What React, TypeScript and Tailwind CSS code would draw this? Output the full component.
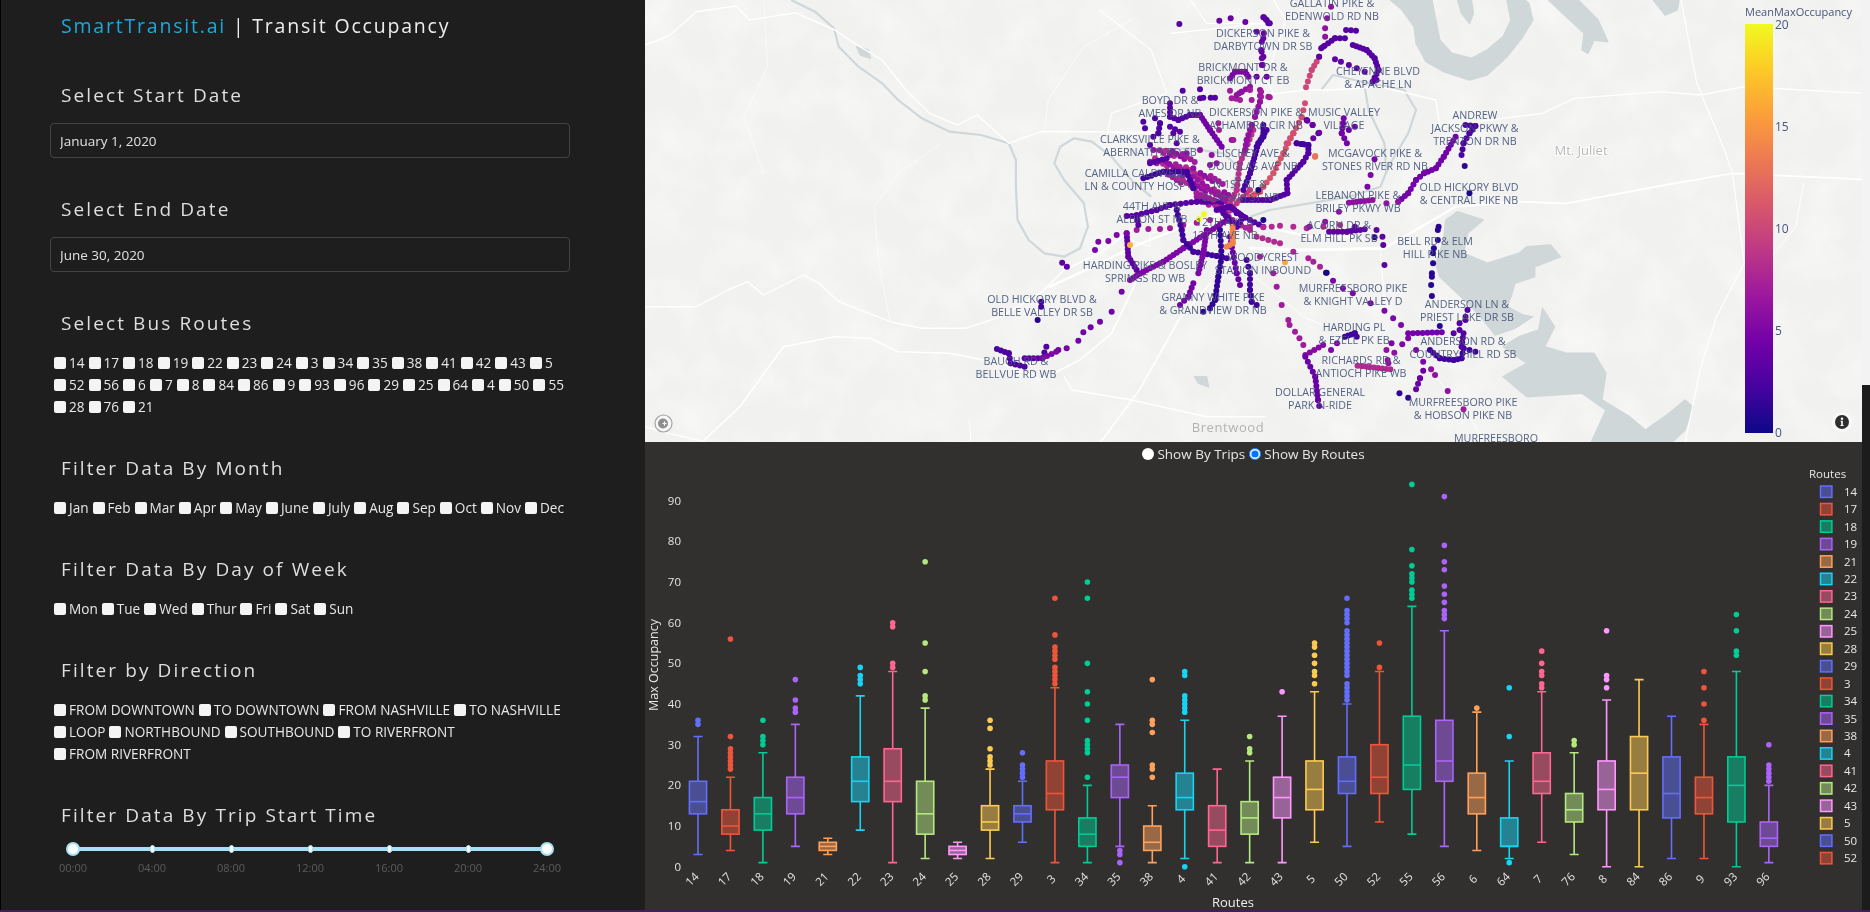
import React from "react";

type Frame = (x: number, y: number) => [number, number];

// the map data was read off crops of the map, so each trace says which crop it came from
const west: Frame = (x, y) => [645 + x / 2.529, y / 3];
const east: Frame = (x, y) => [1250 + x / 2.529, y / 3];
const center: Frame = (x, y) => [1050 + x / 3, 130 + y / 3];
const north: Frame = (x, y) => [1120 + x / 3, y / 3];

const parse = (frame: Frame, pts: string) =>
  pts.split(" ").map((p) => {
    const [x, y] = p.split(",").map(Number);
    return frame(x, y);
  });

const toLine = (frame: Frame, pts: string) =>
  parse(frame, pts)
    .map(([x, y]) => `${x.toFixed(1)},${y.toFixed(1)}`)
    .join(" ");

const PLASMA = [
  [13, 8, 135],
  [70, 3, 159],
  [114, 1, 168],
  [156, 23, 158],
  [189, 55, 134],
  [216, 87, 107],
  [237, 121, 83],
  [251, 159, 58],
  [253, 202, 38],
  [240, 249, 33],
];

function plasma(v: number) {
  const t = (Math.min(v, 20) / 20) * (PLASMA.length - 1);
  const i = Math.min(Math.floor(t), PLASMA.length - 2);
  const c = PLASMA[i].map((a, k) => Math.round(a + (PLASMA[i + 1][k] - a) * (t - i)));
  return `rgb(${c[0]},${c[1]},${c[2]})`;
}

const TRACES: [Frame, number, number, string][] = [
  // center
  [center, 5, 4, "240,450 280,425 340,395 400,355 470,310 530,270"],
  [center, 3.5, 4, "230,310 235,380 260,420"],
  [center, 5, 0, "135,360 145,335 175,333 200,315 230,310"],
  [center, 7, 0, "260,300 295,297 330,297 360,295 400,285 440,278 480,270"],
  [center, 4.5, 0, "215,485 185,545 150,575 122,592 100,607 85,632 50,655 25,660"],
  [center, 3, 5, "230,258 260,258 265,285"],
  [center, 3, 5, "260,255 320,240 360,225 440,215 530,215"],
  [center, 2, 5, "380,240 395,300 400,330 430,365 500,378 530,385"],
  [center, 1.5, 5, "510,300 515,380 505,440 495,510 480,535 460,545"],
  [center, 5, 4, "470,300 460,370 445,430"],
  [center, 4.5, 5, "430,460 415,500 390,525"],
  [center, 2, 6, "590,390 600,430 600,480 605,515 620,525"],
  [center, 4, 5, "540,320 560,430 570,465"],
  [center, 3, 5, "560,250 640,290"],
  [center, 8, 0, "600,290 640,292 665,290 690,287 730,290 770,295 820,290 870,285"],
  [center, 8, 6, "620,320 690,340"],
  [center, 7.5, 0, "730,365 775,385 790,395 810,410"],
  [center, 0.5, 0, "828,428"],
  [center, 7, 0, "630,380 670,430 680,470 695,525 715,570 735,605 760,645"],
  [center, 6, 0, "300,95 360,75 410,70 450,60 485,75 500,100 480,105 430,115 400,135 545,30"],
  [center, 6.5, 5, "430,140 470,170 500,190 530,215"],
  [center, 7, 5, "420,160 440,190 490,210"],
  [center, 7.5, 5, "500,230 560,280 600,300"],
  [center, 9, 5, "540,240 570,210 600,180"],
  [center, 2, 4, "280,145 340,125 410,125 430,175"],
  [center, 3, 4, "300,100 350,85"],
  [center, 8.5, 5, "610,0 570,100 560,180 540,220"],
  [center, 2.5, 4, "650,0 625,40 600,130 580,180"],
  [center, 11, 6, "730,10 700,70 670,130 630,185 600,200"],
  [center, 3, 4, "740,40 775,45 775,70 760,95 710,150 712,190 660,210 580,210"],
  [center, 3, 3, "500,240 540,230 580,260 560,290 520,250"],
  [center, 14, 3, "548,290 548,340 530,350"],
  [center, 20, 0, "447,268 462,253"],
  [center, 16.5, 0, "240,345"],
  [center, 16, 0, "705,397"],
  [center, 0.5, 0, "625,180 640,270 830,428"],
  [center, 12, 0, "795,80"],
  // north
  [north, 3, 0, "178,72 188,272 240,268"],
  [north, 4, 0, "298,62 332,55 376,66 430,52 437,58 445,70"],
  [north, 4, 0, "410,95 430,115 425,155 430,170 428,195 440,230 410,230"],
  [north, 5, 4, "330,235 345,215 375,215 385,230"],
  [north, 7, 0, "335,295 348,296 360,300 395,300 330,272"],
  [north, 6, 4, "390,260 365,275 350,285"],
  [north, 3, 0, "240,295 250,293 272,293 285,293"],
  [north, 6, 6, "420,270 420,305 405,350 395,375 380,420 375,450"],
  [north, 7, 0, "445,290 295,370 297,390 340,420"],
  [north, 3, 4, "150,310 150,350 175,360 210,345 240,345"],
  [north, 4.5, 4, "240,345 270,390 305,440"],
  [north, 2.5, 5, "105,355 120,370 115,400 100,410"],
  [north, 2.5, 5, "70,365 75,385"],
  [north, 3, 5, "150,380 180,395"],
  [north, 3, 0, "160,400 170,430 90,435"],
  [north, 2, 4, "430,375 430,410 410,440"],
  [north, 5, 0, "597,170"],
  [north, 10, 6, "590,185 575,210 558,262"],
  [north, 10.5, 6, "555,310 545,352 520,400 500,430"],
  [north, 2, 0, "560,360 578,375 530,430 548,432 565,438 595,400"],
  // east
  [east, 6, 0, "205,20 195,55 190,85 190,110 185,140"],
  [east, 3, 4, "180,145 215,115 240,115"],
  [east, 3, 4, "243,90 268,92"],
  [east, 3, 4, "260,135 295,150 315,175 325,210 310,245"],
  [east, 3.5, 0, "175,170 215,178 230,185 250,195 270,205 290,215 320,240"],
  [east, 3, 4, "35,52 50,70"],
  [east, 4, 0, "35,100 30,125 28,150 30,175 30,195"],
  [east, 7, 0, "28,275 28,290 50,292 0,270"],
  [east, 4.5, 5, "237,355 232,400 245,430"],
  [east, 4, 0, "250,390 265,380 160,415 175,398 145,362 158,375"],
  [east, 5, 0, "315,478 305,525 297,560"],
  [east, 4.5, 5, "375,605 400,580 420,540 440,520 470,505 490,470 520,410"],
  [east, 2.5, 5, "545,375 570,378 555,400 540,430 535,465"],
  [east, 1.5, 0, "543,498"],
  [east, 0.5, 0, "555,580"],
  [east, 6, 4, "250,608 310,600"],
  [east, 6, 0, "345,610 375,605 225,635 190,665 150,680"],
  [east, 13, 0, "165,468"],
  [east, 3.5, 5, "200,695 245,695 290,688"],
  [east, 3.5, 0, "320,690 335,710 337,735 340,795 265,680"],
  [east, 1, 0, "315,712 477,680 475,690 475,720 465,745 463,760 463,790 460,820 460,830 458,855 460,888"],
  [east, 5, 0, "210,842 235,865 260,880 305,910 340,932 362,955 382,975 400,1015 420,1050 438,1085"],
  [east, 4.5, 5, "400,1000 485,997"],
  [east, 3, 0, "515,1000 545,960 530,990 550,930 545,950 530,970"],
  [east, 1, 0, "480,978"],
  [east, 2, 5, "455,1050 480,1075 515,1080 535,1075 540,1045 570,1055"],
  [east, 3, 5, "540,1000 535,1040"],
  [east, 4, 6, "438,1112 430,1135 420,1168"],
  [east, 6, 0, "458,1108 468,1125 500,1173 345,1050 365,1058 348,1080 350,1090"],
  [east, 1.5, 0, "378,1180 400,1193"],
  [east, 7, 0, "540,1228"],
  [east, 8, 4, "272,1097 355,1108"],
  [east, 5, 0, "358,1030 385,1033 205,1050 220,1030"],
  [east, 2, 4, "240,1010 265,1000 270,1010"],
  [east, 7, 0, "100,975 125,1015"],
  [east, 5.5, 5, "140,1065 185,1035"],
  [east, 4, 5, "140,1070 165,1130 172,1200 175,1218"],
  // west
  [west, 3.5, 0, "1055,788 1067,800"],
  [west, 2, 4, "1002,905 1002,920"],
  [west, 1, 0, "993,960"],
  [west, 2.5, 5, "890,1047 920,1060 925,1090 960,1100"],
  [west, 2.5, 5, "1015,1040 1005,1075"],
  [west, 3.5, 5, "960,1075 1005,1075"],
  [west, 5, 6, "1005,1075 1040,1055"],
];

// the stops northwest of downtown are too many to trace, so they get a fixed scatter along the band
const SCATTER = Array.from({ length: 150 }, (_, i) => {
  const x = 310 + ((i * 73) % 240);
  const y = 60 + ((i * 137) % 190);
  return { x, y, v: 6 + (i % 3) };
}).filter((p) => Math.abs(p.y - 60 - (p.x - 320) * 0.75) < 55);

function sampleTrace(frame: Frame, step: number, pts: string) {
  const line = parse(frame, pts);
  if (step === 0) return line;
  const out: [number, number][] = [];
  for (let i = 0; i < line.length - 1; i++) {
    const [x1, y1] = line[i];
    const [x2, y2] = line[i + 1];
    const n = Math.max(1, Math.round(Math.hypot(x2 - x1, y2 - y1) / step));
    for (let k = 0; k <= n; k++) out.push([x1 + ((x2 - x1) * k) / n, y1 + ((y2 - y1) * k) / n]);
  }
  return out;
}

const LABELS: [number, number, string[]][] = [
  [1332, 3, ["GALLATIN PIKE &", "EDENWOLD RD NB"]],
  [1263, 33, ["DICKERSON PIKE &", "DARBYTOWN DR SB"]],
  [1243, 67, ["BRICKMONT DR &", "BRICKMONT CT EB"]],
  [1378, 71, ["CHEYENNE BLVD", "& APACHE LN"]],
  [1170, 100, ["BOYD DR &", "AMES DR NB"]],
  [1256, 112, ["DICKERSON PIKE &", "ALHAMBRA CIR NB"]],
  [1344, 112, ["MUSIC VALLEY", "VILLAGE"]],
  [1475, 115, ["ANDREW", "JACKSON PKWY &", "TRENTON DR NB"]],
  [1150, 139, ["CLARKSVILLE PIKE &", "ABERNATHY RD SB"]],
  [1253, 153, ["LISCHEY AVE &", "DOUGLAS AVE NB"]],
  [1375, 153, ["MCGAVOCK PIKE &", "STONES RIVER RD NB"]],
  [1135, 173, ["CAMILLA CALDWELL", "LN & COUNTY HOSP"]],
  [1240, 184, ["N 1ST ST &", "OLDHAM ST NB"]],
  [1469, 187, ["OLD HICKORY BLVD", "& CENTRAL PIKE NB"]],
  [1358, 195, ["LEBANON PIKE &", "BRILEY PKWY WB"]],
  [1152, 206, ["44TH AVE &", "ALBION ST NB"]],
  [1225, 222, ["12TH AVE &", "12TH AVE NB"]],
  [1339, 225, ["ACORN DR &", "ELM HILL PK SB"]],
  [1435, 241, ["BELL RD & ELM", "HILL PIKE NB"]],
  [1263, 257, ["WOODYCREST", "STATION INBOUND"]],
  [1145, 265, ["HARDING PIKE & BOSLEY", "SPRINGS RD WB"]],
  [1353, 288, ["MURFREESBORO PIKE", "& KNIGHT VALLEY D"]],
  [1213, 297, ["GRANNY WHITE PIKE", "& GRANDVIEW DR NB"]],
  [1042, 299, ["OLD HICKORY BLVD &", "BELLE VALLEY DR SB"]],
  [1467, 304, ["ANDERSON LN &", "PRIEST LAKE DR SB"]],
  [1354, 327, ["HARDING PL", "& EZELL PK EB"]],
  [1463, 341, ["ANDERSON RD &", "COUNTRY HILL RD SB"]],
  [1361, 360, ["RICHARDS RD &", "ANTIOCH PIKE WB"]],
  [1016, 361, ["BAUGH RD &", "BELLVUE RD WB"]],
  [1320, 392, ["DOLLAR GENERAL", "PARK N-RIDE"]],
  [1463, 402, ["MURFREESBORO PIKE", "& HOBSON PIKE NB"]],
  [1496, 438, ["MURFREESBORO"]],
];

const LAKES: [Frame, string][] = [
  [east, "355,0 385,30 415,80 420,130 445,185 490,215 555,240 600,225 650,170 690,110 715,60 705,10 695,0 650,0 660,60 640,110 600,150 560,175 510,160 480,120 470,60 460,0"],
  [east, "525,0 560,0 565,40 555,70 535,40"],
  [east, "755,0 830,0 880,60 905,125 870,120 855,160 840,150 845,100 800,50"],
  [east, "1020,0 1085,0 1080,30 1050,45"],
  [east, "495,660 525,635 590,660 550,700 540,760 600,790 680,760 700,740 760,735 785,770 720,800 720,830 670,850 660,890 650,920 690,945 715,950 670,985 620,1005 590,960 560,920 480,830 470,790 490,720"],
  [east, "740,925 770,980 745,1040 800,1060 870,1060 900,1120 890,1200 960,1250 1000,1290 1060,1240 1100,1200 1120,1220 1100,1290 1060,1335 860,1335 900,1230 840,1180 700,1190 640,1130 700,1090 640,1040 680,1010 730,990"],
  [west, "1390,1130 1420,1130 1425,1160 1400,1150"],
  [west, "535,140 565,150 570,175 545,165"],
];

const RIVERS: [Frame, string][] = [
  [west, "370,0 430,35 478,85 490,140 540,200 600,250 640,300 700,355 770,395 850,405 920,430 938,480 938,560 942,660 970,720 1010,760 1060,770 1100,745 1120,680 1110,610 1060,540 1035,490 1050,440 1085,415 1130,425 1180,470 1230,540 1280,590"],
  [center, "300,60 420,55 520,70 565,110 545,180"],
  [east, "0,650 50,630 150,610 250,590 330,560 350,500 400,400 420,330 390,270 300,250 210,225 180,270"],
  [east, "290,260 300,330 340,430 345,520"],
];

const ROADS: [Frame, string, number][] = [
  [west, "0,135 60,108 130,35 230,18 265,60 380,38 480,90 530,130 600,180 660,270 720,340 790,375 840,345 920,430 1000,395 1150,395 1300,400", 1.4],
  [west, "0,920 130,920 210,870 260,845 300,885 400,825 440,850 490,905 620,965 700,985 810,985 900,950 1000,880 1060,810 1150,760 1230,690", 1.4],
  [west, "150,1320 240,1220 350,1040 480,1010 570,1015 640,1055 770,1060 900,1090 1000,1140 1100,1080 1180,1000 1240,850", 1.6],
  [west, "1060,1130 1080,1170 1230,1200 1420,1250 1568,1250", 1.4],
  [west, "1150,1330 1250,1170 1350,960 1430,850", 1.6],
  [west, "1150,30 1280,150 1320,280 1180,340 1170,400", 1.2],
  [west, "1380,0 1420,70 1568,70 1330,100", 1.2],
  [west, "0,1280 60,1300 150,1325", 1.2],
  [west, "820,1260 825,1325 650,1330", 1],
  [west, "1010,395 1020,300 1110,140 1230,60", 0.7],
  [west, "300,0 310,200 250,350 300,520", 0.6],
  [west, "750,430 640,520 580,620 590,780 620,965", 0.6],
  [east, "1090,0 1130,250 1200,450 1220,520 1250,790 1180,950 1140,1100 1100,1330", 1.2],
  [east, "680,605 800,610 1050,555 1220,520 1548,538", 1.8],
  [east, "480,380 740,340 820,295 1040,275 1140,285 1250,260 1548,280", 1.3],
  [east, "340,745 130,750 0,745", 3],
  [east, "340,745 520,620 680,605", 2.2],
  [east, "0,290 140,270 200,270 330,260 470,300 480,380", 1.4],
  [east, "1400,550 1380,680 1300,800 1250,790", 0.9],
  [east, "330,760 340,900 470,1130 560,1260 600,1335", 1],
  [east, "60,0 90,60 40,240 60,280 0,420", 1.2],
  [center, "0,470 150,400 250,350 400,290 520,250", 2.4],
  [center, "520,250 640,290 780,320 900,320", 2.4],
  [center, "240,330 300,350 300,310 390,290", 1],
  [center, "540,380 640,460 760,560 900,620", 1],
];

// name, low, q1, median, q3, high, outliers
const BOXES: [string, number, number, number, number, number, number[]][] = [
  ["14", 3, 13, 16, 21, 32, [35, 36]],
  ["17", 4, 8, 10, 14, 22, [24, 25, 26, 27, 28, 29, 32, 56]],
  ["18", 1, 9, 13, 17, 28, [30, 31, 32, 36]],
  ["19", 5, 13, 17, 22, 35, [38, 39, 41, 46]],
  ["21", 3, 4, 5, 6, 7, []],
  ["22", 9, 16, 21, 27, 42, [45, 46, 47, 49]],
  ["23", 1, 16, 21, 29, 48, [49, 50, 59, 60]],
  ["24", 2, 8, 13, 21, 39, [41, 42, 48, 55, 75]],
  ["25", 2, 3, 4, 5, 6, []],
  ["28", 2, 9, 11, 15, 24, [25, 26, 27, 29, 34, 36]],
  ["29", 6, 11, 13, 15, 21, [22, 23, 24, 25, 28]],
  ["3", 1, 14, 18, 26, 44, [45, 46, 47, 48, 49, 51, 52, 53, 54, 57, 66]],
  ["34", 1, 5, 8, 12, 20, [22, 28, 29, 30, 31, 36, 40, 43, 50, 66, 70]],
  ["35", 5, 17, 22, 25, 35, [1, 3, 4]],
  ["38", 1, 4, 6, 10, 15, [22, 24, 25, 33, 35, 36, 46]],
  ["4", 2, 14, 17, 23, 36, [0, 38, 39, 40, 41, 42, 47, 48]],
  ["41", 1, 5, 9, 15, 24, []],
  ["42", 1, 8, 12, 16, 26, [28, 29, 32]],
  ["43", 1, 12, 17, 22, 37, [43]],
  ["5", 6, 14, 19, 26, 43, [45, 47, 48, 50, 52, 54, 55]],
  ["50", 5, 18, 21, 27, 40, [41, 42, 43, 44, 45, 47, 48, 49, 50, 51, 52, 53, 54, 55, 56, 57, 58, 60, 61, 62, 63, 66]],
  ["52", 11, 18, 22, 30, 48, [49, 55]],
  ["55", 8, 19, 25, 37, 64, [66, 67, 68, 70, 71, 72, 74, 78, 94]],
  ["56", 5, 21, 26, 36, 58, [61, 62, 63, 65, 67, 69, 73, 75, 79, 91]],
  ["6", 4, 13, 17, 23, 38, [39]],
  ["64", 2, 5, 5, 12, 26, [1, 32, 44]],
  ["7", 6, 18, 21, 28, 43, [44, 45, 47, 48, 50, 53]],
  ["76", 3, 11, 14, 18, 28, [30, 31]],
  ["8", 0, 14, 19, 26, 41, [44, 46, 47, 58]],
  ["84", 0, 14, 23, 32, 46, []],
  ["86", 2, 12, 18, 27, 37, []],
  ["9", 2, 13, 17, 22, 35, [36, 40, 44, 48]],
  ["93", 0, 11, 20, 27, 48, [52, 53, 58, 62]],
  ["96", 1, 5, 7, 11, 20, [21, 22, 23, 24, 25, 30]],
];

const COLORS = ["#636efa", "#ef553b", "#00cc96", "#ab63fa", "#ffa15a", "#19d3f3", "#ff6692", "#b6e880", "#ff97ff", "#fecb52"];

const boxX = (i: number) => 698 + i * 32.45;
const valueY = (v: number) => 866.7 - v * 4.067;

const ROUTES = ["14", "17", "18", "19", "22", "23", "24", "3", "34", "35", "38", "41", "42", "43", "5", "52", "56", "6", "7", "8", "84", "86", "9", "93", "96", "29", "25", "64", "4", "50", "55", "28", "76", "21"];
const MONTHS = ["Jan", "Feb", "Mar", "Apr", "May", "June", "July", "Aug", "Sep", "Oct", "Nov", "Dec"];
const DAYS = ["Mon", "Tue", "Wed", "Thur", "Fri", "Sat", "Sun"];
const DIRECTIONS = ["FROM DOWNTOWN", "TO DOWNTOWN", "FROM NASHVILLE", "TO NASHVILLE", "LOOP", "NORTHBOUND", "SOUTHBOUND", "TO RIVERFRONT", "FROM RIVERFRONT"];
const TIMES = ["00:00", "04:00", "08:00", "12:00", "16:00", "20:00", "24:00"];

function Heading({ children }: { children: React.ReactNode }) {
  return <h2 className="ml-[11px] text-[19px] leading-[28px] font-normal tracking-[2.1px] text-[#dedede]">{children}</h2>;
}

function CheckList({ items }: { items: string[] }) {
  return (
    <div className="mt-[15px] ml-[4px] flex w-[516px] flex-wrap gap-x-[4px] text-[13.6px] leading-[22px] text-[#e8e8e8]">
      {items.map((item) => (
        <label key={item} className="flex items-center gap-[3px]">
          <input type="checkbox" className="h-[12px] w-[12px] appearance-none rounded-[2px] bg-[#f4f4f4]" />
          {item}
        </label>
      ))}
    </div>
  );
}

function DateField({ value }: { value: string }) {
  return (
    <input
      readOnly
      value={value}
      className="mt-[14px] block h-[35px] w-[520px] rounded-[4px] border border-[#444444] bg-transparent pl-[9px] text-[13.5px] text-[#e0e0e0]"
    />
  );
}

function TimeSlider() {
  return (
    <div className="mt-[12px] ml-[9px] w-[502px]">
      <div className="relative flex h-[16px] items-center justify-between">
        <div className="absolute right-[14px] left-[14px] h-[4px] rounded-full bg-[#a5e0f7]" />
        {TIMES.map((t, i) => (
          <div key={t} className="relative flex w-[28px] justify-center">
            {i === 0 || i === TIMES.length - 1 ? (
              <span className="h-[14px] w-[14px] rounded-full border-[2px] border-[#a5e0f7] bg-white" />
            ) : (
              <span className="h-[8px] w-[5px] rounded-full border border-[#a5e0f7] bg-white" />
            )}
          </div>
        ))}
      </div>
      <div className="mt-[3px] flex justify-between text-[11px] leading-[16px] text-[#5c5c5c]">
        {TIMES.map((t) => (
          <span key={t} className="w-[28px] text-center">
            {t}
          </span>
        ))}
      </div>
    </div>
  );
}

function Sidebar() {
  return (
    <aside className="h-full w-[645px] shrink-0 border-l border-black bg-[#1e1e1e] pt-[12px] pl-[49px]">
      <h1 className="ml-[11px] text-[19.5px] leading-[28px] font-normal tracking-[1.8px] text-[#ededed]">
        <span className="text-[#1ea7dc]">SmartTransit.ai</span> | Transit Occupancy
      </h1>
      <div className="mt-[41px]">
        <Heading>Select Start Date</Heading>
        <DateField value="January 1, 2020" />
      </div>
      <div className="mt-[37px]">
        <Heading>Select End Date</Heading>
        <DateField value="June 30, 2020" />
      </div>
      <div className="mt-[37px]">
        <Heading>Select Bus Routes</Heading>
        <CheckList items={ROUTES} />
      </div>
      <div className="mt-[36px]">
        <Heading>Filter Data By Month</Heading>
        <CheckList items={MONTHS} />
      </div>
      <div className="mt-[36px]">
        <Heading>Filter Data By Day of Week</Heading>
        <CheckList items={DAYS} />
      </div>
      <div className="mt-[36px]">
        <Heading>Filter by Direction</Heading>
        <CheckList items={DIRECTIONS} />
      </div>
      <div className="mt-[36px]">
        <Heading>Filter Data By Trip Start Time</Heading>
        <TimeSlider />
      </div>
    </aside>
  );
}

function TransitMap() {
  return (
    <svg viewBox="645 0 1217 442" className="block h-[442px] w-[1217px] bg-[#f1f1f0]">
      <defs>
        <linearGradient id="plasma" x1="0" y1="1" x2="0" y2="0">
          {PLASMA.map((c, i) => (
            <stop key={i} offset={i / (PLASMA.length - 1)} stopColor={`rgb(${c[0]},${c[1]},${c[2]})`} />
          ))}
        </linearGradient>
        <filter id="terrain" x="0" y="0" width="100%" height="100%">
          <feTurbulence type="fractalNoise" baseFrequency="0.025" numOctaves="4" seed="7" />
          <feColorMatrix values="0 0 0 0 1  0 0 0 0 1  0 0 0 0 1  1.6 0 0 0 -0.62" />
        </filter>
      </defs>
      <rect x="645" y="0" width="1217" height="442" filter="url(#terrain)" opacity="0.55" />
      {LAKES.map(([f, pts], i) => (
        <polygon key={i} points={toLine(f, pts)} fill="#d0d7d9" stroke="#d0d7d9" strokeWidth="1.5" strokeLinejoin="round" />
      ))}
      {RIVERS.map(([f, pts], i) => (
        <polyline key={i} points={toLine(f, pts)} fill="none" stroke="#cfd7da" strokeWidth="2.2" strokeLinejoin="round" />
      ))}
      {ROADS.map(([f, pts, w], i) => (
        <polyline key={i} points={toLine(f, pts)} fill="none" stroke="#ffffff" strokeWidth={w} strokeLinejoin="round" strokeLinecap="round" />
      ))}

      {SCATTER.map((p, i) => {
        const [x, y] = center(p.x, p.y);
        return <circle key={i} cx={x} cy={y} r="3" fill={plasma(p.v)} />;
      })}
      {TRACES.map(([f, v, step, pts], i) => (
        <g key={i} fill={plasma(v)}>
          {sampleTrace(f, step, pts).map(([x, y], k) => (
            <circle key={k} cx={x} cy={y} r="3" />
          ))}
        </g>
      ))}

      <g fontSize="10.7" fill="#47567a" textAnchor="middle" fillOpacity="0.92">
        {LABELS.map(([x, y, lines]) => (
          <text key={lines[0] + y} x={x} y={y + 4}>
            {lines.map((line, i) => (
              <tspan key={i} x={x} y={y + 4 + i * 13.2}>
                {line}
              </tspan>
            ))}
          </text>
        ))}
      </g>

      <text x="1228" y="432" fontSize="13" textAnchor="middle" fill="#b3b3b3" letterSpacing="0.6">
        Brentwood
      </text>
      <text x="1581" y="155" fontSize="13" textAnchor="middle" fill="#b8b8b8" stroke="#ffffff" strokeWidth="2" paintOrder="stroke">
        Mt. Juliet
      </text>

      <rect x="1745" y="24" width="28" height="409" fill="url(#plasma)" />
      <g fontSize="12" fill="#47567a">
        <text x="1745" y="16" fontSize="11">
          MeanMaxOccupancy
        </text>
        <text x="1775" y="29">20</text>
        <text x="1775" y="131">15</text>
        <text x="1775" y="233">10</text>
        <text x="1775" y="335">5</text>
        <text x="1775" y="437">0</text>
      </g>

      {/* map logo */}
      <circle cx="663.5" cy="423.5" r="8.5" fill="#f7f7f7" stroke="#a3a3a3" strokeWidth="1.2" />
      <circle cx="663" cy="423.5" r="5" fill="#8e8e8e" />
      <path d="M664.5 420.5l.7 2.2 2 .8-2 .8-.7 2.2-.7-2.2-2-.8 2-.8z" fill="#f7f7f7" />

      {/* info button */}
      <circle cx="1842" cy="422" r="10" fill="#ffffff" fillOpacity="0.6" />
      <circle cx="1842" cy="422" r="7" fill="#2f2f2f" />
      <circle cx="1842" cy="418.7" r="1.2" fill="#ffffff" />
      <path d="M1840.6 420.7h2.2v4.4h.8v1h-3.2v-1h.8v-3.4h-.6z" fill="#ffffff" />
    </svg>
  );
}

function BoxChart() {
  return (
    <svg viewBox="645 466 1217 444" className="block h-[444px] w-[1217px]">
      <g fontSize="11.5" fill="#e3e3e3" textAnchor="end">
        {[0, 10, 20, 30, 40, 50, 60, 70, 80, 90].map((v) => (
          <text key={v} x="681" y={valueY(v) + 4}>
            {v}
          </text>
        ))}
      </g>
      <text transform="translate(658 665) rotate(-90)" fontSize="12.5" fill="#e8e8e8" textAnchor="middle">
        Max Occupancy
      </text>

      {BOXES.map(([name, low, q1, med, q3, high, outliers], i) => {
        const x = boxX(i);
        const color = COLORS[i % COLORS.length];
        return (
          <g key={name}>
            <g stroke={color} strokeWidth="1.6" fill="none">
              <path d={`M${x} ${valueY(q3)}V${valueY(high)}M${x} ${valueY(q1)}V${valueY(low)}`} />
              <path d={`M${x - 4.5} ${valueY(high)}h9M${x - 4.5} ${valueY(low)}h9`} />
              <rect x={x - 8.6} y={valueY(q3)} width="17.2" height={valueY(q1) - valueY(q3)} fill={color} fillOpacity="0.5" />
              <path d={`M${x - 8.6} ${valueY(med)}h17.2`} />
            </g>
            {outliers.map((v) => (
              <circle key={v} cx={x} cy={valueY(v)} r="2.8" fill={color} />
            ))}
            <text
              transform={`translate(${x - (name.length > 1 ? 3 : 1)} 882) rotate(-45)`}
              fontSize="11.5"
              fill="#e3e3e3"
              textAnchor="middle"
            >
              {name}
            </text>
          </g>
        );
      })}

      <text x="1233" y="907" fontSize="13" fill="#eeeeee" textAnchor="middle">
        Routes
      </text>

      <text x="1809" y="478" fontSize="11.5" fill="#e8e8e8">
        Routes
      </text>
      {BOXES.slice(0, 22).map(([name], i) => {
        const y = 491.7 + i * 17.45;
        const color = COLORS[i % COLORS.length];
        return (
          <g key={name}>
            <rect x="1820.5" y={y - 5.7} width="11.4" height="11.4" fill={color} fillOpacity="0.5" stroke={color} strokeWidth="1.5" />
            <text x="1844" y={y + 4} fontSize="11.5" fill="#e8e8e8">
              {name}
            </text>
          </g>
        );
      })}
    </svg>
  );
}

export default function App() {
  return (
    <div className="flex h-[912px] w-[1870px] flex-col overflow-hidden bg-[#1c1c1c] blur-[0.35px] [font-family:'Open_Sans',sans-serif]">
      <div className="flex h-[910px]">
        <Sidebar />
        <main className="w-[1217px] shrink-0 bg-[#31302e]">
          <TransitMap />
          <div className="flex h-[24px] items-center justify-center gap-[4px] text-[13.5px] text-[#e6e6e6]">
            <label className="flex items-center gap-[3px]">
              <input type="radio" name="mode" className="h-[12px] w-[12px] appearance-none rounded-full bg-white" />
              Show By Trips
            </label>
            <label className="flex items-center gap-[3px]">
              <input type="radio" name="mode" defaultChecked className="m-0 h-[12px] w-[12px]" />
              Show By Routes
            </label>
          </div>
          <BoxChart />
        </main>
        <div className="flex w-[8px] shrink-0 flex-col">
          <div className="h-[385px] bg-[#f3f3f3]" />
          <div className="flex-1 bg-[#1c1c1c]" />
        </div>
      </div>
      <div className="h-[2px] bg-[#4a1a5e]" />
    </div>
  );
}
